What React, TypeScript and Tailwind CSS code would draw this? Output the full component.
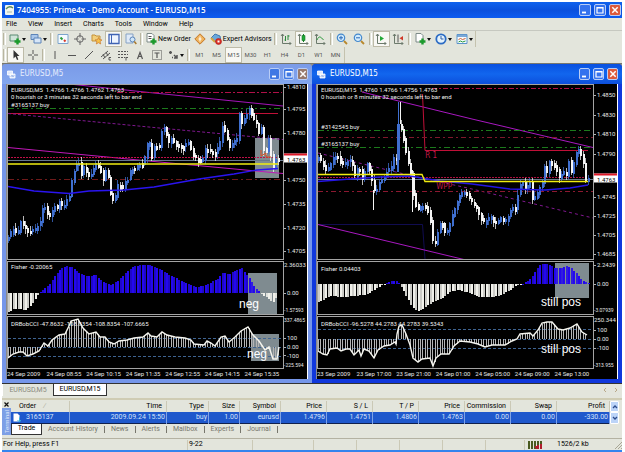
import type { ReactNode } from "react";

type Pt = [number, number];
type Label = { y: number; text: string };
type Line = { pts: string; color: string; dash?: string; w?: number };

const STEP = 2.43;

function sample(points: Pt[], x: number): number {
  for (let i = 1; i < points.length; i++) {
    const [x0, y0] = points[i - 1];
    const [x1, y1] = points[i];
    if (x <= x1) return y0 + ((y1 - y0) * (x - x0)) / (x1 - x0);
  }
  return points[points.length - 1][1];
}

function barsOf(points: Pt[]): Pt[] {
  const out: Pt[] = [];
  const end = points[points.length - 1][0];
  for (let x = points[0][0]; x <= end; x += STEP) out.push([x, sample(points, x)]);
  return out;
}

function noise(i: number): number {
  const v = Math.sin(i * 12.9898) * 43758.5453;
  return v - Math.floor(v);
}

function Candles({ points }: { points: Pt[] }) {
  const closes = barsOf(points);
  return (
    <g shapeRendering="crispEdges">
      {closes.map(([x, close], i) => {
        const open = i ? closes[i - 1][1] : close + 3;
        const up = close < open;
        const top = Math.min(open, close) - noise(i) * 2;
        const bottom = Math.max(open, close, top + 3) + noise(i + 50) * 2;
        const fill = up ? "#3f6fd0" : "#f4f4f4";
        const px = Math.round(x);
        const above = 1 + noise(i + 7) * 4;
        const below = 1 + noise(i + 23) * 4;
        return (
          <g key={i} fill={fill}>
            <rect x={px} y={top - above} width={1} height={bottom - top + above + below} opacity={0.75} />
            <rect x={px} y={top} width={2} height={bottom - top} />
          </g>
        );
      })}
    </g>
  );
}

function Lines({ lines }: { lines: Line[] }) {
  return (
    <>
      {lines.map((l, i) => (
        <polyline key={i} points={l.pts} fill="none" stroke={l.color} strokeWidth={l.w ?? 1} strokeDasharray={l.dash} />
      ))}
    </>
  );
}

function Fisher({ points, zero }: { points: Pt[]; zero: number }) {
  return (
    <g shapeRendering="crispEdges">
      {barsOf(points).map(([x, y], i) => (
        <rect
          key={i}
          x={Math.round(x)}
          width={2}
          y={Math.min(y, zero)}
          height={Math.max(1, Math.abs(zero - y))}
          fill={y < zero ? "#2408ee" : "#f0f0ea"}
          opacity={i % 2 ? 1 : 0.85}
        />
      ))}
    </g>
  );
}

function Cci({ points, zero, levels, x0 }: { points: Pt[]; zero: number; levels: number[]; x0: number }) {
  return (
    <>
      {[...levels, zero].map((y) => (
        <line key={y} x1={x0} x2={x0 + 275} y1={y + 0.5} y2={y + 0.5} stroke="#3f6492" strokeDasharray="3 2" />
      ))}
      <g shapeRendering="crispEdges">
        {barsOf(points).map(([x, y], i) => (
          <rect key={i} x={Math.round(x)} width={1} y={Math.min(y, zero)} height={Math.abs(zero - y)} fill="#b4b4b4" />
        ))}
      </g>
      <polyline points={points.map((p) => p.join(",")).join(" ")} fill="none" stroke="#f4f4ee" strokeWidth={1.4} />
    </>
  );
}

function Plot({ box, children }: { box: string; children: ReactNode }) {
  return (
    <svg viewBox={box} preserveAspectRatio="none" className="block h-full w-full" aria-hidden="true">
      {children}
    </svg>
  );
}

function Panel({
  height,
  top,
  span,
  plot,
  labels,
  quote,
  children,
}: {
  height: string;
  top: number;
  span: number;
  plot: ReactNode;
  labels: Label[];
  quote?: Label;
  children: ReactNode;
}) {
  return (
    <div className={`flex ${height}`}>
      <div className="relative min-w-0 flex-1 border border-[#a4a4a4]">
        {plot}
        {children}
      </div>
      <div className="relative w-[23px] text-[6px] leading-[8px] text-[#e6e6e6]">
        {labels.map((l) => (
          <div
            key={l.text}
            className={`absolute left-0 flex -translate-y-1/2 items-center gap-px ${l.text.length > 7 ? "text-[5px]" : ""}`}
            style={{ top: `${((l.y - top) / span) * 100}%` }}
          >
            {l.text.length < 7 && <span className="h-px w-[2px] bg-[#b0b0b0]" />}
            {l.text}
          </div>
        ))}
        {quote && (
          <div className="absolute inset-x-0 -translate-y-1/2 border-t-2 border-[#e01828] bg-white pl-[3px] leading-[7px] text-black" style={{ top: `${((quote.y - top) / span) * 100}%` }}>
            {quote.text}
          </div>
        )}
      </div>
    </div>
  );
}

function WinButtons({ size, dim }: { size: string; dim?: boolean }) {
  const blue = dim ? "bg-[#3f78e4]" : "bg-[#3472ee]";
  const base = `flex items-center justify-center rounded-[2px] border border-[#b9cdf6] ${size}`;
  return (
    <div className="flex items-center gap-[3px]">
      <button type="button" aria-label="Minimize" className={`${base} ${blue}`}>
        <svg viewBox="0 0 8 8" className="h-2 w-2"><path d="M1 6.5h4" stroke="#fff" strokeWidth="1.8" /></svg>
      </button>
      <button type="button" aria-label="Maximize" className={`${base} ${blue}`}>
        <svg viewBox="0 0 8 8" className="h-2 w-2"><path d="M1 1.5h6v5.500h-6zM1 2h6" fill="none" stroke="#fff" strokeWidth="1.2" /></svg>
      </button>
      <button type="button" aria-label="Close" className={`${base} ${dim ? "bg-[#97796b]" : "bg-[#dc5a3c]"}`}>
        <svg viewBox="0 0 8 8" className="h-2 w-2"><path d="M1.3 1.3l5.4 5.4M6.7 1.3L1.3 6.7" stroke="#fff" strokeWidth="1.5" /></svg>
      </button>
    </div>
  );
}

function ChartWindow({ title, active, times, children }: { title: string; active?: boolean; times: string[]; children: ReactNode }) {
  return (
    <section className={`min-w-0 flex-1 rounded-t-[4px] px-1 pb-1 ${active ? "bg-[#1038dc]" : "bg-[#7596ea]"}`}>
      <header className={`-mx-1 flex h-5 items-center justify-between rounded-t-[4px] pr-1 pl-[5px] ${active ? "bg-linear-to-b from-[#0a50e0] via-[#1266ee] to-[#0d4fdc]" : "bg-linear-to-b from-[#7a9ae8] to-[#82a6ee]"}`}>
        <div className="flex items-center gap-1">
          <svg viewBox="0 0 9 9" className="h-[9px] w-[9px]" aria-hidden="true">
            <path d="M.5 1h5v4h-5zM3 4h5v4H3z" fill="#dfe8fb" stroke="#fff" strokeWidth=".8" />
            <path d="M4 6.5l1-1 1 1 1-1" fill="none" stroke="#3a67c8" strokeWidth=".7" />
          </svg>
          <h2 className={`font-['DejaVu_Sans_Condensed',sans-serif] text-[8px] leading-[10px] ${active ? "text-white" : "text-[#e6edfc]"}`}>{title}</h2>
        </div>
        <WinButtons size="h-3 w-[11px]" dim={!active} />
      </header>
      <div className="border-r border-l border-r-white border-l-[#8a8a8a] bg-black">
        <div className="flex flex-col gap-px">{children}</div>
        <div className="mr-[23px] grid h-[10px] grid-cols-7 text-[6px] leading-[9px] whitespace-nowrap text-[#e6e6e6]">
          {times.map((t) => (
            <span key={t}>{t}</span>
          ))}
        </div>
      </div>
    </section>
  );
}

const note = "absolute font-['Liberation_Sans',sans-serif] text-[12px] leading-[12px] text-white";
const caption = "absolute left-[3px] text-[6px] leading-[7px] whitespace-pre text-[#f0f0f0]";

const m5Price: Pt[] = [[9,237],[14,229],[18,234],[21,222],[24,226],[28,232],[32,232],[36,229],[41,222],[43,210],[46,207],[49,218],[52,214],[54,206],[58,209],[60,202],[64,208],[67,200],[70,196],[73,176],[76,166],[79,162],[82,175],[85,165],[88,178],[92,174],[96,165],[99,167],[102,173],[105,184],[107,163],[110,190],[113,200],[116,196],[119,183],[123,190],[125,182],[128,180],[131,169],[135,170],[138,166],[141,164],[144,165],[147,144],[150,143],[152,159],[155,145],[158,147],[160,148],[163,124],[166,131],[169,143],[172,138],[176,145],[180,146],[184,147],[188,140],[191,148],[194,157],[200,160],[203,161],[206,148],[210,150],[215,155],[218,148],[221,140],[223,126],[226,133],[230,147],[233,143],[238,139],[240,113],[242,123],[247,114],[250,108],[253,118],[257,124],[259,133],[262,128],[264,149],[267,151],[269,139],[271,154],[274,168],[276,159],[279,159]];
const m15Price: Pt[] = [[318,157],[321,162],[325,170],[329,167],[333,157],[337,156],[341,166],[345,163],[349,160],[352,166],[355,178],[358,165],[362,180],[366,164],[368,166],[371,178],[373,191],[376,190],[379,182],[383,178],[387,170],[391,168],[393,158],[396,160],[398,125],[399,124],[402,135],[404,145],[407,160],[410,172],[412,188],[414,204],[418,210],[421,206],[424,206],[428,212],[430,222],[433,248],[436,240],[438,225],[441,222],[445,235],[448,228],[451,218],[455,206],[459,195],[463,191],[467,196],[471,202],[476,208],[480,218],[484,222],[490,216],[495,224],[500,218],[503,222],[507,218],[511,208],[515,208],[519,185],[522,182],[525,190],[528,184],[531,181],[532,202],[536,195],[539,187],[542,182],[544,167],[547,174],[549,162],[553,164],[556,170],[559,178],[563,172],[566,176],[568,160],[571,173],[575,155],[577,148],[580,154],[583,164],[585,180],[588,179]];
const m5Fisher: Pt[] = [[9,312],[14,309],[20,309],[26,310],[32,305],[37,297],[40,293],[44,289],[50,284],[56,275],[62,268],[68,266],[74,268],[80,273],[88,276],[96,275],[100,279],[106,283],[112,285],[118,281],[126,273],[132,267],[140,265],[150,265],[158,268],[165,272],[172,276],[180,280],[188,284],[196,287],[203,286],[210,283],[218,279],[223,273],[230,274],[236,270],[242,268],[245,272],[250,279],[255,287],[260,292],[263,296],[268,298],[273,303],[278,296]];
const m5Cci: Pt[] = [[9,358],[14,354],[20,352],[24,352],[28,356],[34,354],[40,351],[45,343],[49,346],[53,340],[60,335],[66,334],[70,326],[72,321],[79,319],[84,328],[90,334],[97,332],[101,337],[106,337],[110,342],[115,344],[120,341],[128,340],[135,338],[144,337],[149,333],[152,336],[158,337],[163,332],[168,335],[176,337],[186,338],[192,340],[195,344],[205,345],[208,341],[212,343],[216,346],[222,337],[226,336],[230,342],[236,337],[242,331],[249,327],[254,335],[260,341],[266,350],[270,347],[274,359],[278,359],[280,347]];
const m15Fisher: Pt[] = [[318,302],[324,299],[330,296],[342,297],[355,296],[368,294],[376,288],[384,284],[390,281],[396,281],[399,284],[405,295],[412,308],[418,311],[424,308],[432,302],[442,298],[450,291],[460,290],[470,294],[480,297],[492,297],[500,295],[508,291],[515,286],[522,284],[527,281],[532,276],[537,267],[541,264],[547,264],[554,268],[560,268],[566,266],[571,268],[577,275],[581,280],[588,283]];
const m15Cci: Pt[] = [[318,351],[323,354],[327,355],[330,349],[337,348],[341,351],[346,349],[350,349],[354,355],[359,350],[361,356],[364,349],[369,351],[374,358],[378,350],[384,346],[390,345],[395,342],[396,344],[397,334],[399,326],[402,325],[406,334],[410,345],[413,358],[418,362],[422,359],[430,358],[433,366],[436,358],[441,354],[449,354],[454,346],[460,341],[470,342],[478,344],[485,347],[492,345],[505,345],[512,341],[517,339],[520,334],[530,333],[533,336],[538,330],[542,323],[547,322],[552,322],[558,329],[563,330],[570,328],[577,324],[582,332],[587,335]];

const m5Back: Line[] = [
  { pts: "70,84 155,93 284,106", color: "#a414b8" },
  { pts: "118,92.5 283,92.5", color: "#b01048", dash: "6 2 2 2" },
  { pts: "9,108.5 284,108.5", color: "#1c7a1c", dash: "6 3 2 3" },
  { pts: "9,113.5 279,113.5", color: "#c01038" },
  { pts: "9,113.5 155,127.5 284,139.5", color: "#801890", dash: "3 2" },
  { pts: "9,147.5 155,161.5 284,173.5", color: "#c018b8" },
  { pts: "9,157.5 279,157.5", color: "#c01048", dash: "2 1" },
  { pts: "9,160.5 284,160.5", color: "#68788c" },
  { pts: "9,179.5 284,179.5", color: "#701a1a", dash: "6 3 2 3" },
];
const m5Front: Line[] = [
  { pts: "9,164 279,164", color: "#f0ec10", w: 1.6 },
  { pts: "9,186.5 35,191 70,193.5 90,191 125,190 155,187 200,179 235,174 258,170 279,168.5", color: "#2a14f0", w: 1.3 },
  { pts: "262,150 262,156 267,153 267,157 272,157", color: "#e05020" },
];
const m15Back: Line[] = [
  { pts: "432,88.5 592,88.5", color: "#b01048", dash: "5 2 2 2" },
  { pts: "362,92 472,119 593,147.5", color: "#a818c0" },
  { pts: "422.5,94 425,150.5 588,150.5", color: "#c01038" },
  { pts: "318,130.5 593,130.5", color: "#1c7a1c", dash: "6 3 2 3" },
  { pts: "318,137.5 593,137.5", color: "#80182c", dash: "5 3 2 3" },
  { pts: "318,147.5 593,147.5", color: "#1c7a1c", dash: "6 3 2 3" },
  { pts: "318,153 400,173 472,189 593,218", color: "#801890", dash: "3 3" },
  { pts: "318,177.5 588,177.5", color: "#b01040", dash: "2 1" },
  { pts: "318,179.5 593,179.5", color: "#68788c" },
  { pts: "318,191.5 593,191.5", color: "#8c1830", dash: "5 3 2 3" },
  { pts: "318,224.5 422.5,224.5 425,259", color: "#100c50" },
  { pts: "318,224.5 466,260", color: "#a818c0" },
];
const m15Front: Line[] = [
  { pts: "318,181.5 350,179 380,177 410,176 440,181 472,184 510,189 545,190 570,188 588,185", color: "#2414e4", w: 1.3 },
  { pts: "318,174.5 422,174.5 425,181.5 588,181.5", color: "#f0ec10", w: 1.4 },
];

function M5Window() {
  return (
    <ChartWindow title="EURUSD,M5" times={["24 Sep 2009", "24 Sep 08:55", "24 Sep 10:15", "24 Sep 11:35", "24 Sep 12:55", "24 Sep 14:15", "24 Sep 15:35"]}>
      <Panel
        height="h-[176px]" top={84} span={176}
        labels={[{ y: 87, text: "1.4810" }, { y: 109, text: "1.4795" }, { y: 133, text: "1.4780" }, { y: 180, text: "1.4750" }, { y: 204, text: "1.4735" }, { y: 228, text: "1.4720" }, { y: 251, text: "1.4705" }]}
        quote={{ y: 158, text: "1.4763" }}
        plot={
          <Plot box="9 85 275 174">
            <rect x={256} y={138} width={24} height={40} fill="#7f8b90" />
            <Lines lines={m5Back} />
            <Candles points={m5Price} />
            <Lines lines={m5Front} />
          </Plot>
        }
      >
        <p className={`${caption} top-px`}>{"EURUSD,M5  1.4766 1.4766 1.4762 1.4763\n0 hourish or 3 minutes 32 seconds left to bar end"}</p>
        <p className={`${caption} top-4`}>#3165137 buy</p>
      </Panel>
      <Panel
        height="h-[54px]" top={261} span={54}
        labels={[{ y: 265, text: "2.36033" }, { y: 293, text: "0.00" }, { y: 310, text: "-1.57593" }]}
        plot={
          <Plot box="9 262 275 52">
            <rect x={249} y={273} width={29} height={41} fill="#7f8b90" />
            <Fisher points={m5Fisher} zero={293} />
          </Plot>
        }
      >
        <p className={`${caption} top-px`}>Fisher -0.20065</p>
        <p className={`${note} right-6 bottom-1`}>neg</p>
      </Panel>
      <Panel
        height="h-[53px]" top={316} span={53}
        labels={[{ y: 320, text: "337.4865" }, { y: 338, text: "100" }, { y: 347, text: "0.00" }, { y: 356, text: "-100" }, { y: 365, text: "-225.594" }]}
        plot={
          <Plot box="9 317 275 51">
            <rect x={252} y={334} width={28} height={27} fill="#7f8b90" />
            <Cci points={m5Cci} zero={347} levels={[338, 356]} x0={9} />
          </Plot>
        }
      >
        <p className={`${caption} top-[3px]`}>DRBobCCI -47.8632 -108.8354 -108.8354 -107.6665</p>
        <p className={`${note} right-4 bottom-2`}>neg</p>
      </Panel>
    </ChartWindow>
  );
}

function M15Window() {
  return (
    <ChartWindow active title="EURUSD,M15" times={["23 Sep 2009", "23 Sep 17:00", "23 Sep 21:00", "24 Sep 01:00", "24 Sep 05:00", "24 Sep 09:00", "24 Sep 13:00"]}>
      <Panel
        height="h-[176px]" top={84} span={176}
        labels={[{ y: 95, text: "1.4850" }, { y: 115, text: "1.4830" }, { y: 134, text: "1.4810" }, { y: 154, text: "1.4790" }, { y: 197, text: "1.4745" }, { y: 216, text: "1.4725" }, { y: 235, text: "1.4705" }, { y: 254, text: "1.4685" }]}
        quote={{ y: 178, text: "1.4763" }}
        plot={
          <Plot box="318 85 275 174">
            <Lines lines={m15Back} />
            <Candles points={m15Price} />
            <g shapeRendering="crispEdges">
              <rect x={398} y={102} width={1} height={60} fill="#3f6fd0" />
              <rect x={397} y={124} width={2} height={48} fill="#3f6fd0" />
              <rect x={400} y={102} width={1} height={22} fill="#f4f4f4" />
              <rect x={412} y={170} width={1} height={42} fill="#f4f4f4" />
              <rect x={373} y={190} width={1} height={20} fill="#f4f4f4" />
            </g>
            <Lines lines={m15Front} />
          </Plot>
        }
      >
        <p className={`${caption} top-px`}>{"EURUSD,M15  1.4760 1.4766 1.4756 1.4763\n0 hourish or 8 minutes 32 seconds left to bar end"}</p>
        <p className={`${caption} top-[38px]`}>#3142545 buy</p>
        <p className={`${caption} top-[55px]`}>#3165137 buy</p>
        <p className="absolute top-[66px] left-[39%] font-['DejaVu_Sans_Condensed',sans-serif] text-[8px] leading-[9px] text-[#c01848]">R 1</p>
        <p className="absolute top-[97px] left-[43%] font-['DejaVu_Sans_Condensed',sans-serif] text-[8px] leading-[9px] text-[#c01848]">WPP</p>
      </Panel>
      <Panel
        height="h-[54px]" top={261} span={54}
        labels={[{ y: 265, text: "2.2439" }, { y: 284, text: "0.00" }, { y: 310, text: "-3.07939" }]}
        plot={
          <Plot box="318 262 275 52">
            <rect x={555} y={263} width={34} height={35} fill="#7f8b90" />
            <Fisher points={m15Fisher} zero={284} />
          </Plot>
        }
      >
        <p className={`${caption} top-[3px]`}>Fisher 0.04403</p>
        <p className={`${note} right-3 bottom-[6px]`}>still pos</p>
      </Panel>
      <Panel
        height="h-[53px]" top={316} span={53}
        labels={[{ y: 320, text: "250.344" }, { y: 330, text: "100" }, { y: 339, text: "0.00" }, { y: 348, text: "-100" }, { y: 365, text: "-313.955" }]}
        plot={
          <Plot box="318 317 275 51">
            <Cci points={m15Cci} zero={339} levels={[329, 348]} x0={318} />
          </Plot>
        }
      >
        <p className={`${caption} top-[3px]`}>DRBobCCI -96.5278 44.2783 44.2783 39.5343</p>
        <p className={`${note} right-3 bottom-[13px]`}>still pos</p>
      </Panel>
    </ChartWindow>
  );
}

function Grip() {
  return <span className="mx-px h-3 w-[3px] border-x border-r-white border-l-[#b9b5a0]" />;
}

function Tool({ label, on, wide, text, children }: { label: string; on?: boolean; wide?: boolean; text?: string; children: ReactNode }) {
  const width = text ? "px-px" : wide ? "w-[21px]" : "w-[17px]";
  return (
    <button type="button" aria-label={label} className={`flex h-4 shrink-0 items-center justify-center gap-px ${width} ${on ? "border border-[#bdbba8] bg-[#f8f8f4]" : ""}`}>
      <svg viewBox="0 0 12 12" className="h-3 w-3" fill="none" stroke="#555" strokeWidth="1">{children}</svg>
      {text}
      {wide && <svg viewBox="0 0 4 3" className="h-[3px] w-1"><path d="M0 0h4L2 3z" fill="#111" /></svg>}
    </button>
  );
}

const plus = <path d="M8.5 5.5v6M5.5 8.5h6" stroke="#1c9a2c" strokeWidth="2.4" />;
const axes = <path d="M2.5 1v9.500H11M1 3l1.500-2L4 3M9.500 9l1.500 1.500-1.500 1.500" stroke="#6c7a6c" />;
const page = <path d="M2 .5h5l2 2V9H2z" fill="#fff" stroke="#7c8a88" />;

function MainToolbar() {
  return (
    <div className="flex h-4 items-center text-[7px] leading-[9px]">
      <Grip />
      <Tool label="New chart" wide><path d="M1 2h8v6H1z" fill="#cfe3d8" stroke="#5a8a72" />{plus}</Tool>
      <Tool label="Profiles" wide><path d="M1 1.5h7v5H1z" fill="#a9c6ea" stroke="#5c84b8" /><path d="M4 5h7v5H4z" fill="#d7e6f8" stroke="#5c84b8" /></Tool>
      <Grip />
      <Tool label="Market watch"><path d="M1 1.5h10v9H1z" fill="#f4faff" stroke="#7ca4cc" /><path d="M3.5 4.5l2 2" stroke="#2a9a3a" strokeWidth="2" /><path d="M7 7l1.500 1.500" stroke="#d83828" strokeWidth="2" /></Tool>
      <Tool label="Data window"><circle cx="6" cy="6" r="3.3" stroke="#666" /><path d="M6 0v4.500M6 7.500V12M0 6h4.500M7.500 6H12" stroke="#666" /></Tool>
      <Tool label="Navigator"><path d="M1 2h3l1 1h4v5H1z" fill="#f2cf7a" stroke="#c49138" /><path d="M7.5 4.5l1 2.200 2.500.2-1.900 1.600.6 2.500-2.200-1.300-2.200 1.300.6-2.500L4 6.900l2.500-.2z" fill="#f7c34a" stroke="#c87830" strokeWidth=".7" /></Tool>
      <Tool label="Terminal" on><path d="M1 1.5h10v9H1z" fill="#eef4ff" stroke="#3f63b4" strokeWidth="1.3" /><path d="M3.5 2v8" stroke="#3f63b4" /></Tool>
      <Tool label="Strategy tester"><path d="M1 1h7v9H1z" fill="#dfeaf8" stroke="#86a2c4" /><circle cx="7.5" cy="6.5" r="2.5" fill="#cfe6f8" stroke="#5c84b8" /><path d="M9.3 8.5l2 2.500" stroke="#a8782c" strokeWidth="1.5" /></Tool>
      <Grip />
      <Tool label="New Order" text="New Order">{page}<path d="M3.5 3.5h3M3.5 5.5h3" />{plus}</Tool>
      <Tool label="MetaEditor"><path d="M6 .8L11.2 6 6 11.2.8 6z" fill="#efb35c" stroke="#c4782c" /><path d="M6 3.5v5M4.5 6h3" stroke="#fff" /></Tool>
      <Tool label="Expert Advisors" text="Expert Advisors"><path d="M1 5l4-4 5 2 .5 3L6 9z" fill="#6aa8dc" stroke="#3f78b0" /><path d="M1 5l4 4" stroke="#d8a840" strokeWidth="2" /><circle cx="8.5" cy="8.5" r="3" fill="#d82c24" stroke="#b01c18" strokeWidth=".6" /><path d="M7.5 7.5h2v2h-2z" fill="#fff" stroke="none" /></Tool>
      <Grip />
      <Tool label="Bar chart">{axes}<path d="M5.5 3v5M5.5 7H4.500M8 2v5M8 3h1.500" stroke="#2c8a3c" /></Tool>
      <Tool label="Candlesticks" on>{axes}<path d="M6.5 1v8" stroke="#157a25" /><path d="M5 2.5h3v5H5z" fill="#22a838" stroke="#157a25" strokeWidth=".6" /></Tool>
      <Tool label="Line chart">{axes}<path d="M3 7c2-5 4-3 6.500 0" stroke="#2c9a3c" /></Tool>
      <Grip />
      <Tool label="Zoom in"><circle cx="5" cy="4.8" r="3.7" fill="#d4ecfc" stroke="#4488cc" strokeWidth="1.2" /><path d="M3 4.8h4M5 2.8v4" stroke="#2868b8" /><path d="M8 8l3 3" stroke="#b8882c" strokeWidth="1.8" /></Tool>
      <Tool label="Zoom out"><circle cx="5" cy="4.8" r="3.7" fill="#d4ecfc" stroke="#4488cc" strokeWidth="1.2" /><path d="M3 4.8h4" stroke="#2868b8" /><path d="M8 8l3 3" stroke="#b8882c" strokeWidth="1.8" /></Tool>
      <Grip />
      <Tool label="Auto scroll" on>{axes}<path d="M5 3l4 2.500L5 8z" fill="#22a838" stroke="none" /></Tool>
      <Tool label="Chart shift">{axes}<path d="M6 1.5v8" /><path d="M11 3L7.5 5.2 11 7.5z" fill="#d03828" stroke="none" /></Tool>
      <Grip />
      <Tool label="Indicators" wide>{page}{plus}</Tool>
      <Tool label="Periods" wide><circle cx="6" cy="6" r="4.7" fill="#e4f2fc" stroke="#2c6cc4" strokeWidth="1.8" /><path d="M6 3v3h2.500" stroke="#2c5ca4" /></Tool>
      <Tool label="Templates" wide><path d="M1 1.5h10v9H1z" fill="#f4faff" stroke="#5c94cc" /><path d="M1 3h10" stroke="#5c94cc" strokeWidth="1.6" /><path d="M2.5 6.5l2-1 2 1 3-1" stroke="#d06030" /><path d="M2.5 9l2-1 2 1 3-1" stroke="#2c9a3c" /></Tool>
      <span className="h-4 border-l border-[#c4c2ae]" />
    </div>
  );
}

function DrawToolbar() {
  return (
    <div className="flex h-4 items-center text-[6px] leading-[8px] text-[#555]">
      <Grip />
      <Tool label="Cursor" on><path d="M3.5 1v8.500l2-2 1.500 3.500 1.300-.6L7 7h2.500z" fill="#333" stroke="none" /></Tool>
      <Tool label="Crosshair"><path d="M6 1v4M6 7v4M1 6h4M7 6h4" /></Tool>
      <Grip />
      <Tool label="Vertical line"><path d="M6 2v8" /></Tool>
      <Tool label="Horizontal line"><path d="M2 6.5h8" /></Tool>
      <Tool label="Trend line"><path d="M2 10l8-8" /></Tool>
      <Tool label="Channel"><path d="M1 8l7-6M3 10l7-6M3 5l2 4M6 3l2 4M9 8.5h2M9 11h2M9 8.5v2.500" /></Tool>
      <Tool label="Fibonacci"><path d="M1 2.5h10M1 5.5h10M1 8.5h7" strokeDasharray="2 1" /><path d="M9 8v3.500M9 8.5h2" /></Tool>
      <Tool label="Text"><path d="M3.5 10L6 3.5 8.5 10M4.5 7.5h3" strokeWidth="1.2" /></Tool>
      <Tool label="Text label"><path d="M1.5 1.5h9v9h-9z" strokeDasharray="1 1" /><path d="M3.5 4h5M6 4v5" strokeWidth="1.2" /></Tool>
      <Tool label="Arrows" wide><path d="M2 3.5h3M3.5 2v3M7 6l3 3M10 6v3H7M5 8.5h1" strokeWidth="1.5" /></Tool>
      <Grip />
      {["M1", "M5", "M15", "M30", "H1", "H4", "D1", "W1", "MN"].map((p) => (
        <button key={p} type="button" className={`h-4 w-[17px] shrink-0 text-center ${p === "M15" ? "border border-[#bdbba8] bg-[#f8f8f4]" : ""}`}>{p}</button>
      ))}
      <span className="h-4 border-l border-[#c4c2ae]" />
    </div>
  );
}

const columns = [
  { name: "Order", width: "w-[58px]", value: "3165137" },
  { name: "Time", width: "", value: "2009.09.24 15:50" },
  { name: "Type", width: "w-[42px]", value: "buy" },
  { name: "Size", width: "w-[31px]", value: "1.00" },
  { name: "Symbol", width: "w-[41px]", value: "eurusd" },
  { name: "Price", width: "w-[46px]", value: "1.4796" },
  { name: "S / L", width: "w-[46px]", value: "1.4751" },
  { name: "T / P", width: "w-[46px]", value: "1.4806" },
  { name: "Price", width: "w-[46px]", value: "1.4763" },
  { name: "Commission", width: "w-[46px]", value: "0.00" },
  { name: "Swap", width: "w-[46px]", value: "0.00" },
  { name: "Profit", width: "w-[53px]", value: "-330.00" },
];

function Terminal() {
  return (
    <section className="flex border-t-2 border-[#cfccb4] pt-px text-[7px] leading-[9px]">
      <div className="flex w-[9px] flex-col">
        <button type="button" aria-label="Close terminal" className="flex h-[7px] items-center justify-center">
          <svg viewBox="0 0 5 5" className="h-[5px] w-[5px]"><path d="M.5.5l4 4M4.5.5l-4 4" stroke="#111" strokeWidth="1.2" /></svg>
        </button>
        <div className="flex h-[27px] items-center justify-center bg-[#7d9fe6] text-[6px] leading-[9px] text-[#dfe8fb]">
          <span className="rotate-180 [writing-mode:vertical-rl]">Terminal</span>
        </div>
      </div>
      <div className="min-w-0 flex-1">
        <div className="flex">
          <table className="min-w-0 flex-1 table-fixed border-collapse">
            <thead>
              <tr className="h-[11px]">
                {columns.map((c, i) => (
                  <th key={i} scope="col" className={`border-r border-[#cbc9b6] p-0 pr-1 font-normal ${c.width} ${i ? "text-right" : "pl-2 text-left"}`}>
                    {c.name}
                    {!i && <span className="pl-2 text-[#a8a694]">∕</span>}
                  </th>
                ))}
              </tr>
            </thead>
            <tbody>
              <tr className="h-[11px] border-b border-[#10204c] bg-[#1f58cc] text-[#d5e2fb]">
                {columns.map((c, i) => (
                  <td key={i} className={`border-r border-[#7ea2e6] p-0 pr-px ${i ? "text-right" : "text-left"}`}>
                    {i ? c.value : (
                      <span className="flex items-center gap-[5px] pl-[2px]">
                        <svg viewBox="0 0 8 9" className="h-[9px] w-2"><path d="M.5.5h4l2 2v6h-6z" fill="#fff" /><path d="M6.5 4.5V9M4.5 7l2 2 1.500-2" stroke="#38b0e0" fill="none" /></svg>
                        {c.value}
                      </span>
                    )}
                  </td>
                ))}
              </tr>
            </tbody>
          </table>
          <div className="mr-[3px] flex w-[9px] flex-col">
            {["M1 4l2-2 2 2", "M1 2l2 2 2-2"].map((d, i) => (
              <button key={d} type="button" aria-label={i ? "Scroll down" : "Scroll up"} className="flex flex-1 items-center justify-center rounded-[1px] border border-white bg-[#bcd4f8]">
                <svg viewBox="0 0 6 6" className="h-[6px] w-[6px]"><path d={d} fill="none" stroke="#2c4c8c" strokeWidth="1.3" /></svg>
              </button>
            ))}
          </div>
        </div>
        <div role="tablist" className="flex h-[11px] text-[#77766c]">
          <button type="button" role="tab" aria-selected="true" className="w-[31px] rounded-b-[1px] border border-t-0 border-[#333] bg-white text-center text-black">Trade</button>
          {["Account History", "News", "Alerts", "Mailbox", "Experts", "Journal"].map((t) => (
            <button key={t} type="button" role="tab" aria-selected="false" className="flex items-center pl-[6px]">
              {t}
              <span className="ml-[6px] h-[7px] w-px bg-[#77766c]" />
            </button>
          ))}
        </div>
      </div>
    </section>
  );
}

export default function App() {
  return (
    <main className="bg-white pt-[2px] pr-[3px] pl-[2px] font-[Roboto,'Noto_Sans',sans-serif] text-black">
      <div className="bg-[#e3e5dc]">
        <header className="flex h-4 items-center justify-between bg-linear-to-b from-[#0f62ee] via-[#0b50dc] to-[#0d5cf0] pr-px pl-[3px]">
          <div className="flex items-center gap-[3px]">
            <svg viewBox="0 0 9 10" className="h-[10px] w-[9px]" aria-hidden="true"><rect width="9" height="10" rx="1" fill="#f2f5ee" /><path d="M1 4q3-4 7-1" fill="none" stroke="#5c8c5c" strokeWidth="1.3" /><path d="M2 7h5" stroke="#a8b8a8" /></svg>
            <h1 className="font-['Open_Sans',sans-serif] text-[8px] leading-[10px] font-semibold text-white">7404955: Prime4x - Demo Account - EURUSD,M15</h1>
          </div>
          <WinButtons size="h-3 w-3" />
        </header>
        <nav className="flex h-3 items-center gap-[11px] pl-1 text-[7px] leading-[9px]">
          {["File", "View", "Insert", "Charts", "Tools", "Window", "Help"].map((m) => (
            <button key={m} type="button">{m}</button>
          ))}
        </nav>
        <div className="border-t border-[#c6c8c0]">
          <MainToolbar />
          <DrawToolbar />
        </div>
        <div className="flex border-t border-b border-t-[#77776f] border-b-[#333] bg-[#8f8f87]">
          <M5Window />
          <M15Window />
        </div>
        <div className="flex h-[14px] items-start justify-between text-[7px] leading-[11px]">
          <div role="tablist" className="flex">
            <button type="button" role="tab" aria-selected="false" className="h-3 w-[51px] border-l border-white text-[#8a897c]">EURUSD,M5</button>
            <button type="button" role="tab" aria-selected="true" className="h-3 w-[54px] border border-t-0 border-[#333] bg-white">EURUSD,M15</button>
          </div>
          <div className="flex gap-[7px] pt-1 pr-1">
            {["M3 0L1 2l2 2", "M1 0l2 2-2 2"].map((d, i) => (
              <button key={d} type="button" aria-label={i ? "Next chart" : "Previous chart"}>
                <svg viewBox="0 0 4 4" className="h-1 w-1"><path d={d} fill="none" stroke="#b8a888" /></svg>
              </button>
            ))}
          </div>
        </div>
        <Terminal />
        <footer className="mt-[3px] flex h-3 items-center border-t border-[#b4b2a2] text-[7px] leading-[9px]">
          <span className="flex-1 pl-px">For Help, press F1</span>
          <span className="h-[10px] w-[65px] border-l border-[#cbc9b6] pl-px">9-22</span>
          <span className="h-[10px] w-[61px] border-l border-[#cbc9b6]" />
          {[0, 1, 2, 3].map((n) => (
            <span key={n} className="h-[10px] w-[43px] border-l border-[#cbc9b6]" />
          ))}
          <span className="h-[10px] w-[39px] border-l border-[#cbc9b6]" />
          <span className="flex h-[10px] w-[98px] items-center border-l border-[#cbc9b6] pl-[3px]">
            <svg viewBox="0 0 15 8" className="h-2 w-[15px]" aria-hidden="true">
              <path d="M1 0v8M4 0v8M7 0v8M10 0v8M13 0v8" stroke="#4a5a20" strokeWidth="2" />
              <path d="M7 6h2v2M10 4v4M13 3v5" stroke="#b01c2c" strokeWidth="2" />
            </svg>
            <span className="pl-[14px]">1526/2 kb</span>
            <svg viewBox="0 0 8 8" className="ml-auto h-2 w-2" aria-hidden="true"><path d="M1 8l7-7M4 8l4-4M7 8l1-1" stroke="#a8a694" /></svg>
          </span>
        </footer>
      </div>
      <div className="h-[3px] bg-[#3484ee]" />
    </main>
  );
}
